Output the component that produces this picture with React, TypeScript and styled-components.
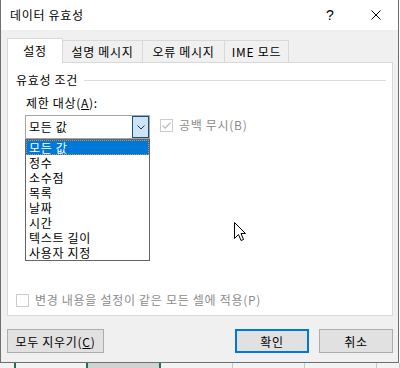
import React from 'react';
import styled, {createGlobalStyle} from 'styled-components';

const GlobalStyle = createGlobalStyle`
  html, body {
    margin: 0;
    padding: 0;
  }
  body {
    width: 400px;
    height: 368px;
    overflow: hidden;
    background: #ffffff;
    font-family: "Noto Sans CJK KR", "Noto Sans", sans-serif;
    font-size: 12px;
    letter-spacing: 0.7px;
    color: #000000;
  }
  #root {
    position: relative;
    width: 400px;
    height: 368px;
  }
`

const limitTypes = ['모든 값', '정수', '소수점', '목록', '날짜', '시간', '텍스트 길이', '사용자 지정']

const tabs = [
    {label: '설정', width: 56},
    {label: '설명 메시지', width: 81},
    {label: '오류 메시지', width: 83},
    {label: 'IME 모드', width: 65},
]

const sheetCells = [
    {width: 16, shade: false, green: true},
    {width: 72, shade: false, green: true},
    {width: 73, shade: true, green: true},
    {width: 72, shade: false, green: false},
    {width: 72, shade: false, green: false},
    {width: 72, shade: false, green: false},
    {width: 23, shade: false, green: false},
]

const App = () => {
    return (
        <>
            <GlobalStyle/>
            <Dialog>
                <TitleBar>
                    <Title>데이터 유효성</Title>
                    <TitleButtons>
                        <HelpBox>?</HelpBox>
                        <CloseBox>
                            <svg width="10" height="10" viewBox="0 0 10 10">
                                <path d="M0.5 0.5 L9.5 9.5 M9.5 0.5 L0.5 9.5" stroke="#000" strokeWidth="1" fill="none"/>
                            </svg>
                        </CloseBox>
                    </TitleButtons>
                </TitleBar>
                <Body>
                    <TabStrip>
                        {tabs.map((t, i) => (
                            <Tab key={t.label} $active={i === 0} $width={t.width} $first={i === 0}>{t.label}</Tab>
                        ))}
                    </TabStrip>
                    <Panel>
                        <SectionHeader>
                            <span>유효성 조건</span>
                            <Rule/>
                        </SectionHeader>
                        <FieldLabel>제한 대상(<Mnemonic>A</Mnemonic>):</FieldLabel>
                        <ComboRow>
                            <ComboWrap>
                                <Combo>
                                    <ComboText>모든 값</ComboText>
                                    <DropButton>
                                        <svg width="8" height="5" viewBox="0 0 8 5">
                                            <path d="M0.5 0.5 L4 4 L7.5 0.5" stroke="#333" strokeWidth="1" fill="none"/>
                                        </svg>
                                    </DropButton>
                                </Combo>
                                <DropList>
                                    {limitTypes.map((item, i) => (
                                        <DropItem key={item} $selected={i === 0}>{item}</DropItem>
                                    ))}
                                </DropList>
                            </ComboWrap>
                            <CheckRow $top={3}>
                                <CheckBox>
                                    <svg width="11" height="11" viewBox="0 0 11 11">
                                        <path d="M1.5 5.5 L4.2 8.2 L9.5 2.5" stroke="#bcbcbc" strokeWidth="1.2" fill="none"/>
                                    </svg>
                                </CheckBox>
                                <DisabledText>공백 무시(B)</DisabledText>
                            </CheckRow>
                        </ComboRow>
                        <Spacer/>
                        <CheckRow $top={0}>
                            <CheckBox/>
                            <DisabledText>변경 내용을 설정이 같은 모든 셀에 적용(P)</DisabledText>
                        </CheckRow>
                    </Panel>
                    <ButtonRow>
                        <DialogButton $width={97}>모두 지우기(<Mnemonic>C</Mnemonic>)</DialogButton>
                        <RightButtons>
                            <DialogButton $width={74} $default>확인</DialogButton>
                            <DialogButton $width={74}>취소</DialogButton>
                        </RightButtons>
                    </ButtonRow>
                </Body>
            </Dialog>
            <SheetStrip>
                {sheetCells.map((c, i) => (
                    <SheetCell key={i} $width={c.width} $shade={c.shade} $green={c.green}/>
                ))}
            </SheetStrip>
            <Cursor>
                <svg width="12" height="19" viewBox="0 0 12 19">
                    <path d="M0.5 0.5 L0.5 16.5 L4.5 12.5 L7 18.5 L9.5 17.5 L7 11.5 L11.5 11.5 Z"
                          fill="#fff" stroke="#000" strokeWidth="1" strokeLinejoin="miter"/>
                </svg>
            </Cursor>
        </>
    );
};

export default App;

const Dialog = styled.div`
  width: 399px;
  height: 363px;
  box-sizing: border-box;
  border: 1px solid #6f6f6f;
  border-top: none;
  display: flex;
  flex-direction: column;
  background: #f0f0f0;
`

const TitleBar = styled.div`
  height: 30px;
  flex-shrink: 0;
  background: #ffffff;
  display: flex;
  align-items: center;
  justify-content: space-between;
`

const Title = styled.div`
  padding-left: 9px;
  font-size: 12px;
  line-height: 16px;
`

const TitleButtons = styled.div`
  display: flex;
  height: 30px;
`

const HelpBox = styled.div`
  width: 46px;
  display: flex;
  align-items: center;
  justify-content: center;
  font-family: "Liberation Sans", Arial, sans-serif;
  font-size: 14px;
  letter-spacing: 0;
  padding-left: 1px;
`

const CloseBox = styled.div`
  width: 45px;
  display: flex;
  align-items: center;
  justify-content: center;
`

const Body = styled.div`
  flex: 1;
  display: flex;
  flex-direction: column;
  padding: 8px 5px 9px 6px;
`

const TabStrip = styled.div`
  height: 24px;
  display: flex;
  align-items: flex-end;
  position: relative;
  z-index: 1;
`

const Tab = styled.div<{$active: boolean; $width: number; $first: boolean}>`
  box-sizing: border-box;
  width: ${p => p.$width}px;
  height: ${p => p.$active ? 25 : 22}px;
  margin-bottom: ${p => p.$active ? -1 : 0}px;
  margin-left: ${p => p.$first ? 0 : -1}px;
  border: 1px solid #d9d9d9;
  border-bottom: none;
  background: ${p => p.$active ? '#ffffff' : '#f0f0f0'};
  position: relative;
  z-index: ${p => p.$active ? 2 : 1};
  display: flex;
  align-items: center;
  justify-content: center;
  padding-bottom: ${p => p.$active ? 1 : 0}px;
  font-size: 12px;
  white-space: nowrap;
`

const Panel = styled.div`
  box-sizing: border-box;
  height: 254px;
  border: 1px solid #d9d9d9;
  background: #ffffff;
  padding: 9px 6px 8px 8px;
  display: flex;
  flex-direction: column;
  position: relative;
`

const SectionHeader = styled.div`
  height: 16px;
  display: flex;
  align-items: center;
  gap: 6px;
  line-height: 16px;
  white-space: nowrap;
`

const Rule = styled.div`
  flex: 1;
  height: 1px;
  background: #dcdcdc;
`

const FieldLabel = styled.div`
  margin-top: 7px;
  margin-left: 10px;
  line-height: 16px;
`

const Mnemonic = styled.span`
  text-decoration: underline;
  text-underline-offset: 1px;
`

const ComboRow = styled.div`
  margin-top: 4px;
  margin-left: 9px;
  display: flex;
  align-items: flex-start;
  gap: 10px;
`

const ComboWrap = styled.div`
  position: relative;
  width: 125px;
`

const Combo = styled.div`
  box-sizing: border-box;
  height: 24px;
  border: 1px solid #a6a6a6;
  display: flex;
  background: #ffffff;
`

const ComboText = styled.div`
  flex: 1;
  padding-left: 3px;
  line-height: 22px;
`

const DropButton = styled.div`
  box-sizing: border-box;
  width: 17px;
  height: 22px;
  border: 1px solid #1f4e79;
  background: #cce4f7;
  display: flex;
  align-items: center;
  justify-content: center;
`

const DropList = styled.div`
  position: absolute;
  top: 100%;
  left: 0;
  width: 125px;
  box-sizing: border-box;
  border: 1px solid #646464;
  background: #ffffff;
  z-index: 3;
`

const DropItem = styled.div<{$selected: boolean}>`
  height: 15px;
  line-height: 15px;
  padding-left: 3px;
  white-space: nowrap;
  overflow: hidden;
  background: ${p => p.$selected ? '#0078d7' : 'transparent'};
  color: ${p => p.$selected ? '#ffffff' : '#000000'};
  outline: ${p => p.$selected ? '1px dotted #d9904a' : 'none'};
  outline-offset: -1px;
`

const CheckRow = styled.div<{$top: number}>`
  margin-top: ${p => p.$top}px;
  display: flex;
  align-items: center;
  gap: 6px;
  height: 14px;
  white-space: nowrap;
`

const CheckBox = styled.div`
  box-sizing: border-box;
  width: 13px;
  height: 13px;
  border: 1px solid #cccccc;
  background: #ffffff;
  display: flex;
  align-items: center;
  justify-content: center;
`

const DisabledText = styled.span`
  color: #8c8c8c;
  line-height: 14px;
`

const Spacer = styled.div`
  flex: 1;
`

const ButtonRow = styled.div`
  margin-top: 13px;
  display: flex;
  justify-content: space-between;
`

const RightButtons = styled.div`
  display: flex;
  gap: 10px;
`

const DialogButton = styled.div<{$width: number; $default?: boolean}>`
  box-sizing: border-box;
  width: ${p => p.$width}px;
  height: 24px;
  border: ${p => p.$default ? '2px solid #0078d7' : '1px solid #adadad'};
  background: #e1e1e1;
  display: flex;
  align-items: center;
  justify-content: center;
  white-space: nowrap;
  font-size: 12px;
`

const SheetStrip = styled.div`
  display: flex;
  height: 5px;
  background: #f3f3f3;
`

const SheetCell = styled.div<{$width: number; $shade: boolean; $green: boolean}>`
  box-sizing: border-box;
  width: ${p => p.$width}px;
  height: 5px;
  background: ${p => p.$shade ? '#d2d2d2' : '#f3f3f3'};
  border-right: ${p => p.$green ? '2px solid #217346' : '1px solid #c8c8c8'};
`

const Cursor = styled.div`
  position: absolute;
  left: 234px;
  top: 222px;
  width: 12px;
  height: 19px;
  z-index: 10;
  pointer-events: none;
`
